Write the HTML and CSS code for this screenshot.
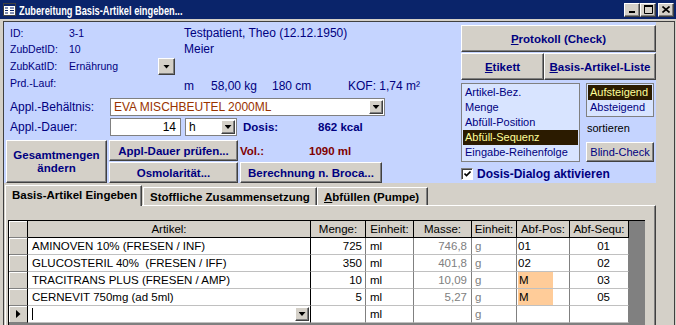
FILE: index.html
```html
<!DOCTYPE html>
<html lang="de">

<head>
  <meta charset="UTF-8">
  <meta name="viewport" content="width=device-width, initial-scale=1.0">
  <title>Zubereitung Basis-Artikel eingeben</title>
  <link rel="stylesheet" href="styles.css">
</head>

<body>
  <div class="window">
    <div class="titlebar">
      <svg class="app-icon" width="13" height="13" viewBox="0 0 13 13">
        <rect x="0.5" y="0.5" width="12" height="12" fill="#fff" stroke="#404040"/>
        <rect x="1" y="1" width="11" height="2" fill="#0a246a"/>
        <path d="M2 5h3M7 5h4M2 7.5h3M7 7.5h4M2 10h3M7 10h4" stroke="#0a246a" stroke-width="1.2"/>
      </svg>
      <div class="title-box">
        <span class="title">Zubereitung Basis-Artikel eingeben...</span>
      </div>
      <div class="caption-buttons">
        <span class="cap-btn">
          <svg width="8" height="7" viewBox="0 0 8 7"><rect x="1" y="5" width="6" height="2" fill="#000"/></svg>
        </span>
        <span class="cap-btn">
          <svg width="9" height="9" viewBox="0 0 9 9"><path d="M0.5 1.5h8v7h-8z" fill="none" stroke="#000"/><rect x="0" y="0" width="9" height="2" fill="#000"/></svg>
        </span>
        <span class="cap-btn close">
          <svg width="8" height="7" viewBox="0 0 8 7"><path d="M0.5 0.5l7 6M7.5 0.5l-7 6" stroke="#000" stroke-width="1.6"/></svg>
        </span>
      </div>
    </div>

    <div class="client">
      <div class="form-header">
        <div class="left-pane">
          <div class="info-grid">
            <span class="lbl">ID:</span>
            <span class="val">3-1</span>
            <span></span>
            <span class="patient">Testpatient, Theo (12.12.1950)</span>

            <span class="lbl">ZubDetID:</span>
            <span class="val">10</span>
            <span></span>
            <span class="patient">Meier</span>

            <span class="lbl">ZubKatID:</span>
            <span class="val">Ernährung</span>
            <span class="drop-btn big"></span>
            <span></span>

            <span class="lbl">Prd.-Lauf:</span>
            <span class="val"></span>
            <span></span>
            <span class="patient measures">
              <span class="m-sex">m</span><span class="m-kg">58,00 kg</span><span class="m-cm">180 cm</span><span>KOF: 1,74 m²</span>
            </span>
          </div>

          <div class="field-row first">
            <span class="field-lbl">Appl.-Behältnis:</span>
            <div class="combo combo-wide">
              <span class="combo-text red">EVA MISCHBEUTEL 2000ML</span>
              <span class="drop-btn"></span>
            </div>
          </div>

          <div class="field-row">
            <span class="field-lbl">Appl.-Dauer:</span>
            <div class="textbox">14</div>
            <div class="combo combo-unit">
              <span class="combo-text">h</span>
              <span class="drop-btn"></span>
            </div>
            <span class="result-lbl">Dosis:</span>
            <span class="result-val">862 kcal</span>
          </div>

          <div class="action-grid">
            <div class="btn tall">Gesamtmengen<br>ändern</div>
            <div class="btn">Appl-Dauer prüfen...</div>
            <div class="vol-line">
              <span class="vol-lbl">Vol.:</span>
              <span class="vol-val">1090 ml</span>
            </div>
            <div class="btn">Osmolarität...</div>
            <div class="btn">Berechnung n. Broca...</div>
          </div>
        </div>

        <div class="right-pane">
          <div class="btn btn-protokoll"><span><u>P</u>rotokoll (Check)</span></div>
          <div class="btn-row">
            <div class="btn btn-etikett"><span><u>E</u>tikett</span></div>
            <div class="btn btn-liste"><span><u>B</u>asis-Artikel-Liste</span></div>
          </div>
          <div class="sort-row">
            <div class="listbox sort-fields">
              <div class="item">Artikel-Bez.</div>
              <div class="item">Menge</div>
              <div class="item">Abfüll-Position</div>
              <div class="item selected">Abfüll-Sequenz</div>
              <div class="item">Eingabe-Reihenfolge</div>
            </div>
            <div class="sort-side">
              <div class="listbox sort-order">
                <div class="item selected">Aufsteigend</div>
                <div class="item">Absteigend</div>
              </div>
              <div class="sort-caption">sortieren</div>
              <div class="btn btn-blind">Blind-Check</div>
            </div>
          </div>
          <div class="check-row">
            <span class="checkbox">
              <svg width="7" height="7" viewBox="0 0 7 7"><path d="M0.5 2.5l2 2 4-4" fill="none" stroke="#000" stroke-width="1.6"/></svg>
            </span>
            <span class="check-lbl">Dosis-Dialog aktivieren</span>
          </div>
        </div>
      </div>

      <div class="detail">
        <div class="tabs">
          <div class="tab active">Basis-Artikel Eingeben</div>
          <div class="tab tab-stoff">Stoffliche Zusammensetzung</div>
          <div class="tab tab-pumpe"><span><u>A</u>bfüllen (Pumpe)</span></div>
        </div>
        <div class="tab-page">
          <div class="datasheet">
            <div class="ds-row ds-head">
              <span class="sel"></span>
              <span>Artikel:</span>
              <span>Menge:</span>
              <span>Einheit:</span>
              <span>Masse:</span>
              <span>Einheit:</span>
              <span>Abf-Pos:</span>
              <span>Abf-Sequ:</span>
            </div>
            <div class="ds-row">
              <span class="sel"></span>
              <span class="c-art">AMINOVEN 10% (FRESEN / INF)</span>
              <span class="c-num">725</span>
              <span class="c-unit">ml</span>
              <span class="c-mass">746,8</span>
              <span class="c-g">g</span>
              <span class="c-pos">01</span>
              <span class="c-seq">01</span>
            </div>
            <div class="ds-row">
              <span class="sel"></span>
              <span class="c-art">GLUCOSTERIL 40%&nbsp; (FRESEN / IFF)</span>
              <span class="c-num">350</span>
              <span class="c-unit">ml</span>
              <span class="c-mass">401,8</span>
              <span class="c-g">g</span>
              <span class="c-pos">02</span>
              <span class="c-seq">02</span>
            </div>
            <div class="ds-row">
              <span class="sel"></span>
              <span class="c-art">TRACITRANS PLUS (FRESEN / AMP)</span>
              <span class="c-num">10</span>
              <span class="c-unit">ml</span>
              <span class="c-mass">10,09</span>
              <span class="c-g">g</span>
              <span class="c-pos"><span class="mark">M</span></span>
              <span class="c-seq">03</span>
            </div>
            <div class="ds-row">
              <span class="sel"></span>
              <span class="c-art">CERNEVIT 750mg (ad 5ml)</span>
              <span class="c-num">5</span>
              <span class="c-unit">ml</span>
              <span class="c-mass">5,27</span>
              <span class="c-g">g</span>
              <span class="c-pos"><span class="mark">M</span></span>
              <span class="c-seq">05</span>
            </div>
            <div class="ds-row new-row">
              <span class="sel current"></span>
              <span class="c-art"><span class="caret"></span><span class="drop-btn cell-drop"></span></span>
              <span class="c-num"></span>
              <span class="c-unit">ml</span>
              <span class="c-mass"></span>
              <span class="c-g">g</span>
              <span class="c-pos"></span>
              <span class="c-seq"></span>
            </div>
          </div>
        </div>
      </div>
    </div>
  </div>
</body>

</html>
```

FILE: styles.css
```css
* {
  box-sizing: border-box;
}

body {
  margin: 0;
  background-color: #d4d0c8;
  font-family: "Liberation Sans", Arial, sans-serif;
  color: #000080;
}

.window {
  width: 676px;
  height: 325px;
  overflow: hidden;
  background-color: #d4d0c8;
}

/* title bar */
.titlebar {
  height: 19px;
  display: flex;
  align-items: center;
  padding: 0 2px 0 3px;
  background-color: #0a246a;
  color: #fff;
}

.app-icon {
  flex: none;
  margin-right: 3px;
}

.title-box {
  flex: 1;
  overflow: hidden;
  white-space: nowrap;
}

.title {
  display: inline-block;
  font-size: 12.5px;
  font-weight: bold;
  transform: scaleX(0.74);
  transform-origin: left center;
}

.caption-buttons {
  display: flex;
}

.cap-btn {
  width: 16px;
  height: 14px;
  display: flex;
  align-items: center;
  justify-content: center;
  background-color: #d4d0c8;
  border: 1px solid;
  border-color: #fff #404040 #404040 #fff;
  box-shadow: inset -1px -1px #808080;
}

.cap-btn.close {
  margin-left: 2px;
}

/* client area */
.client {
  height: 304px;
  margin: 2px 1px 0 3px;
  border: 1px solid #404040;
  border-bottom: none;
}

.form-header {
  display: flex;
  width: 652px;
  height: 161px;
  background-color: #c5d4ff;
}

.left-pane {
  width: 457px;
  padding: 3px 0 0 6px;
}

.info-grid {
  display: grid;
  grid-template-columns: 59px 89px 17px 1fr;
  grid-template-rows: 16px 16px 18px 15px;
  align-items: center;
  font-size: 10.5px;
}

.patient {
  padding-left: 9px;
  font-size: 12px;
}

.measures {
  display: flex;
  align-self: start;
  padding-top: 4px;
}

.m-sex {
  width: 27px;
}

.m-kg {
  width: 61px;
}

.m-cm {
  width: 76px;
}

.drop-btn {
  flex: none;
  width: 14px;
  height: 14px;
  display: flex;
  align-items: center;
  justify-content: center;
  background-color: #d4d0c8;
  border: 1px solid;
  border-color: #fff #404040 #404040 #fff;
  box-shadow: inset -1px -1px #808080;
}

.drop-btn::after {
  content: "";
  width: 7px;
  height: 4px;
  background-color: #000;
  clip-path: polygon(0 0, 100% 0, 50% 100%);
}

.drop-btn.big {
  width: 17px;
  height: 17px;
  margin-top: 1px;
}

.field-row {
  display: flex;
  align-items: center;
  height: 18px;
  margin-top: 2px;
  font-size: 12px;
}

.field-row.first {
  margin-top: 8px;
}

.field-lbl {
  width: 100px;
}

.combo {
  display: flex;
  align-items: center;
  height: 18px;
  padding: 1px;
  background-color: #fff;
  border: 1px solid #808080;
}

.combo-wide {
  width: 275px;
}

.combo-unit {
  width: 52px;
  margin-left: 4px;
}

.combo-text {
  flex: 1;
  padding-left: 2px;
  color: #000;
}

.combo-text.red {
  color: #993300;
}

.textbox {
  width: 71px;
  height: 18px;
  padding-right: 4px;
  text-align: right;
  line-height: 16px;
  background-color: #fff;
  border: 1px solid #808080;
  color: #000;
}

.result-lbl,
.vol-lbl {
  margin-left: 6px;
  width: 75px;
  font-size: 11.5px;
  font-weight: bold;
}

.result-val,
.vol-val {
  font-size: 11.5px;
  font-weight: bold;
}

.action-grid {
  display: grid;
  grid-template-columns: 101px 126px 145px;
  grid-template-rows: 21px 21px;
  column-gap: 2px;
  row-gap: 1px;
  margin: 4px 0 0 -4px;
}

.action-grid .btn:nth-child(2) {
  margin-right: -3px;
}

.vol-line {
  display: flex;
  align-items: center;
  padding-left: 3px;
  color: #800000;
}

.vol-lbl {
  margin-left: 0;
  width: 69px;
}

.btn {
  display: flex;
  align-items: center;
  justify-content: center;
  text-align: center;
  font-size: 11.5px;
  font-weight: bold;
  color: #000080;
  background-color: #d4d0c8;
  border: 1px solid;
  border-color: #fff #404040 #404040 #fff;
  box-shadow: inset -1px -1px #808080;
}

.btn.tall {
  grid-row: span 2;
  line-height: 13px;
}

.action-grid .btn:nth-child(4) {
  margin-right: -3px;
}

.action-grid .btn:last-child {
  grid-column: 3;
  margin-left: 3px;
}

/* right pane */
.right-pane {
  width: 195px;
  padding-top: 3px;
}

.btn-protokoll {
  height: 27px;
}

.btn-row {
  display: flex;
  margin-top: 1px;
}

.btn-row .btn {
  height: 27px;
}

.btn-etikett {
  width: 83px;
}

.btn-liste {
  width: 112px;
}

.sort-row {
  display: flex;
  gap: 6px;
  margin-top: 3px;
}

.listbox {
  padding: 1px 1px 0;
  background-color: #d8e4ff;
  border: 1px solid #808080;
  font-size: 11px;
}

.listbox .item {
  height: 15px;
  line-height: 15px;
  padding-left: 2px;
}

.listbox .item.selected {
  background-color: #2b1b00;
  color: #ffff99;
}

.sort-fields {
  width: 119px;
  height: 79px;
}

.sort-side {
  width: 68px;
}

.sort-order {
  height: 34px;
}

.sort-caption {
  height: 15px;
  margin-top: 4px;
  line-height: 15px;
  padding-left: 1px;
  font-size: 11px;
  color: #000;
}

.btn-blind {
  height: 20px;
  margin-top: 6px;
  font-size: 11px;
  font-weight: normal;
}

.check-row {
  display: flex;
  align-items: center;
  gap: 4px;
  height: 16px;
  margin-top: 4px;
}

.checkbox {
  width: 12px;
  height: 12px;
  display: flex;
  align-items: center;
  justify-content: center;
  background-color: #fff;
  border: 1px solid;
  border-color: #808080 #fff #fff #808080;
  box-shadow: inset 1px 1px #404040;
}

.check-lbl {
  font-size: 12px;
  font-weight: bold;
}

/* detail section with tabs */
.detail {
  padding-top: 2px;
}

.tabs {
  display: flex;
  align-items: flex-end;
  height: 20px;
  margin-left: 1px;
  position: relative;
  z-index: 1;
}

.tab {
  height: 18px;
  display: flex;
  align-items: center;
  padding-left: 6px;
  font-size: 11.5px;
  font-weight: bold;
  color: #000;
  background-color: #d4d0c8;
  border-top: 1px solid #fff;
  border-left: 1px solid #fff;
  border-right: 1px solid #404040;
  box-shadow: inset -1px 0 #808080;
}

.tab.active {
  width: 137px;
  height: 21px;
  margin-bottom: -1px;
  padding-bottom: 2px;
}

.tab-stoff {
  width: 174px;
  margin-left: 1px;
}

.tab-pumpe {
  width: 111px;
}

.tab-page {
  width: 651px;
  height: 120px;
  margin-left: 1px;
  padding: 14px 0 0 2px;
  border-top: 1px solid #fff;
  border-left: 1px solid #fff;
  border-right: 1px solid #404040;
  box-shadow: inset -1px 0 #808080;
}

.datasheet {
  width: 637px;
  height: 110px;
  background-color: #808080;
  border-top: 1px solid #000;
  border-left: 1px solid #000;
}

.ds-row {
  display: grid;
  grid-template-columns: 19px 283px 55px 48px 58px 45px 53px 59px;
  width: 620px;
  height: 17px;
  font-size: 11.5px;
  color: #000;
}

.ds-row > span {
  height: 17px;
  line-height: 16px;
  white-space: nowrap;
  overflow: hidden;
  background-color: #fff;
  border-right: 1px solid #808080;
  border-bottom: 1px solid #c0c0c0;
}

.ds-row > .sel {
  background-color: #d4d0c8;
  border-right-color: #000;
  border-bottom-color: #808080;
  box-shadow: inset 1px 1px #fff;
}

.ds-head > span {
  text-align: center;
  background-color: #d4d0c8;
  border-right-color: #000;
  border-bottom-color: #000;
}

.ds-row > .c-art {
  display: flex;
  align-items: center;
  padding-left: 4px;
  border-right-color: #000;
}

.c-num {
  text-align: right;
  padding-right: 3px;
}

.c-unit {
  padding-left: 4px;
}

.c-mass {
  text-align: right;
  padding-right: 4px;
  color: #808080;
}

.c-g {
  padding-left: 3px;
  color: #808080;
}

.c-pos {
  padding-left: 1px;
}

.mark {
  display: block;
  width: 35px;
  height: 16px;
  padding-left: 1px;
  background-color: #ffcc99;
}

.c-seq {
  text-align: right;
  padding-right: 18px;
}

.sel.current {
  display: flex;
  align-items: center;
  justify-content: center;
}

.sel.current::after {
  content: "";
  width: 5px;
  height: 9px;
  background-color: #000;
  clip-path: polygon(0 0, 100% 50%, 0 100%);
}

.caret {
  width: 1px;
  height: 12px;
  background-color: #000;
}

.cell-drop {
  width: 14px;
  height: 14px;
  margin-left: auto;
  margin-right: 1px;
}
```
